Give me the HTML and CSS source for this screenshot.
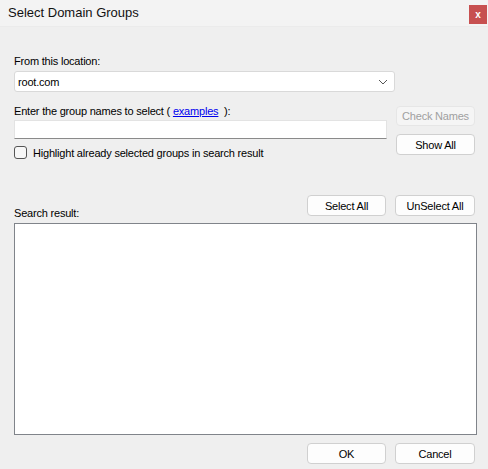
FILE: index.html
```html
<!DOCTYPE html>
<html lang="en">
<head>
    <meta charset="UTF-8">
    <title>Select Domain Groups</title>
    <link rel="stylesheet" href="styles.css">
</head>
<body>
    <div class="dialog">
        <div class="titlebar">
            <span class="title">Select Domain Groups</span>
            <button class="close">x</button>
        </div>

        <div class="content">
            <div class="label location-label">From this location:</div>
            <div class="combo">
                <span>root.com</span>
                <svg class="chevron" width="10" height="6" viewBox="0 0 10 6">
                    <path d="M1 1 L5 5 L9 1" fill="none" stroke="#555" stroke-width="1"/>
                </svg>
            </div>

            <div class="names-row">
                <div class="names-left">
                    <div class="label">Enter the group names to select ( <a href="#">examples</a>&nbsp; ):</div>
                    <input class="names-input" type="text">
                    <label class="check">
                        <span class="box"></span>
                        Highlight already selected groups in search result
                    </label>
                </div>
                <div class="names-right">
                    <button class="btn disabled">Check Names</button>
                    <button class="btn">Show All</button>
                </div>
            </div>

            <div class="result-head">
                <div class="label">Search result:</div>
                <div class="btn-group">
                    <button class="btn">Select All</button>
                    <button class="btn wide">UnSelect All</button>
                </div>
            </div>
            <div class="listbox"></div>

            <div class="footer">
                <button class="btn">OK</button>
                <button class="btn wide">Cancel</button>
            </div>
        </div>
    </div>
</body>
</html>
```

FILE: styles.css
```css
body {
    margin: 0;
    font-family: "Liberation Sans", Arial, sans-serif;
    font-size: 11px;
    letter-spacing: -0.2px;
    color: #000;
    background-color: #efefef;
}

.dialog {
    width: 488px;
    height: 469px;
    background-color: #efefef;
    overflow: hidden;
}

.titlebar {
    height: 27px;
    background-color: #f3f3f3;
    border-bottom: 1px solid #ebebeb;
    display: flex;
    justify-content: space-between;
    align-items: flex-start;
    box-sizing: border-box;
}

.title {
    font-size: 13px;
    letter-spacing: 0;
    margin: 5px 0 0 8px;
    color: #111;
}

.close {
    margin: 5px 1px 0 0;
    width: 18px;
    height: 19px;
    border: none;
    padding: 0;
    background-color: #c75050;
    color: #fff;
    font-family: "Liberation Sans", Arial, sans-serif;
    font-weight: bold;
    font-size: 10px;
    line-height: 17px;
}

.content {
    padding: 0 13px 0 14px;
}

.label {
    line-height: 14px;
}

.location-label {
    margin-top: 27px;
}

.combo {
    margin-top: 3px;
    width: 381px;
    height: 21px;
    box-sizing: border-box;
    background-color: #fff;
    border: 1px solid #d9d9d9;
    border-radius: 3px;
    display: flex;
    align-items: center;
    justify-content: space-between;
    padding: 0 6px 0 3px;
}

.chevron {
    margin-top: 1px;
}

.names-row {
    display: flex;
    margin-top: 12px;
}

.names-left {
    width: 373px;
}

.names-left a {
    color: #0000ee;
}

.names-input {
    display: block;
    margin: 2px 0 0 0;
    width: 373px;
    height: 19px;
    box-sizing: border-box;
    border: 1px solid #e3e3e3;
    border-bottom: 1px solid #8a8a8a;
    background-color: #fff;
    padding: 0;
}

.check {
    display: flex;
    align-items: center;
    margin-top: 7px;
}

.box {
    width: 11px;
    height: 11px;
    border: 1px solid #555;
    border-radius: 3px;
    background-color: #f7f7f7;
    margin-right: 6px;
}

.names-right {
    margin-left: 9px;
    padding-top: 2px;
    display: flex;
    flex-direction: column;
    gap: 8px;
}

.btn {
    width: 79px;
    height: 21px;
    box-sizing: border-box;
    border: 1px solid #d0d0d0;
    border-radius: 4px;
    background-color: #fdfdfd;
    font-family: "Liberation Sans", Arial, sans-serif;
    font-size: 11px;
    letter-spacing: -0.2px;
    color: #000;
    padding: 0;
}

.btn.wide {
    width: 80px;
}

.btn.disabled {
    height: 20px;
    background-color: #f5f5f5;
    border-color: #e6e6e6;
    color: #a0a0a0;
}

.result-head {
    display: flex;
    justify-content: space-between;
    align-items: flex-end;
    margin-top: 36px;
}

.result-head .label {
    margin-bottom: -4px;
}

.btn-group {
    display: flex;
    gap: 9px;
}

.listbox {
    margin-top: 7px;
    margin-right: -2px;
    height: 212px;
    box-sizing: border-box;
    background-color: #fff;
    border: 1px solid #80848a;
}

.footer {
    display: flex;
    justify-content: flex-end;
    gap: 9px;
    margin-top: 8px;
}
```
